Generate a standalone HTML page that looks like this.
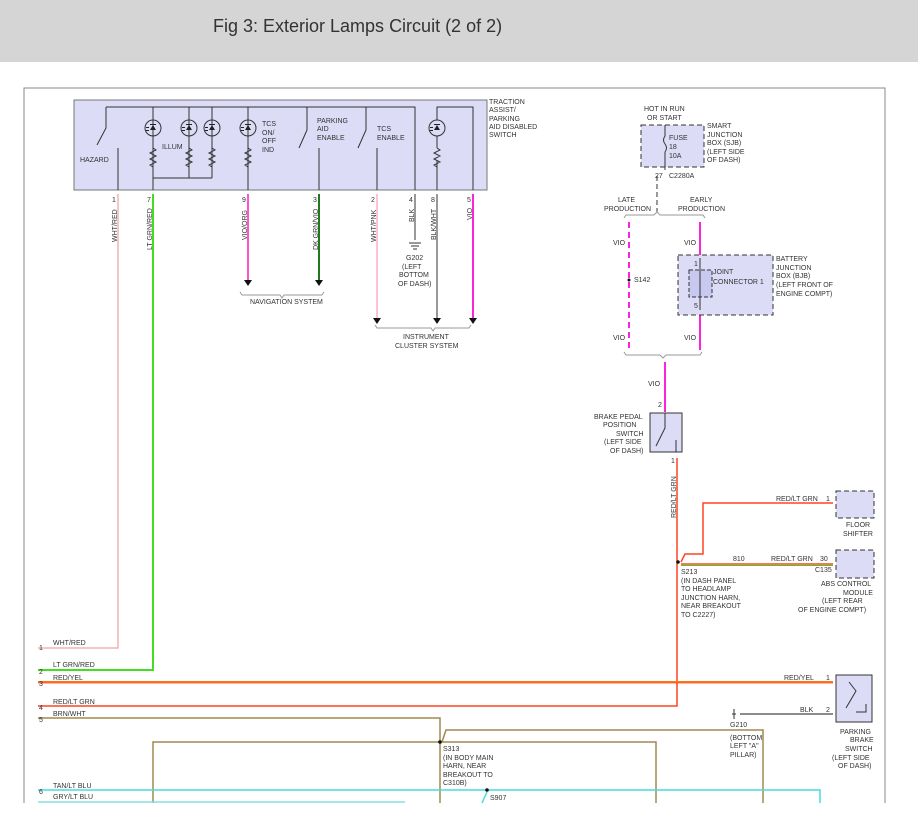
<!DOCTYPE html>
<html><head><meta charset="utf-8"><style>
html,body{margin:0;padding:0;background:#fff;width:918px;height:827px;overflow:hidden}
.hdr{position:absolute;left:0;top:0;width:918px;height:62px;background:#d5d5d5}
.hdr span{position:absolute;left:213px;top:16px;font:18px "Liberation Sans",sans-serif;color:#333}
svg{position:absolute;left:0;top:0}
text{font-family:"Liberation Sans",sans-serif;font-size:7px;fill:#333}
</style></head><body>
<div class="hdr"><span>Fig 3: Exterior Lamps Circuit (2 of 2)</span></div>
<svg width="918" height="827" viewBox="0 0 918 827">
<path d="M24 803V88H885V803" fill="none" stroke="#888" stroke-width="1"/>
<rect x="74" y="100" width="413" height="90" fill="#dcdcf7" stroke="#777"/>
<g stroke="#333" stroke-width="1" fill="none">
<path d="M106 107H415V190M153 107V190M189 107V178M212 107V178M248 107V190M307 107V130M366 107V130"/>
<path d="M153 178H212"/>
<path d="M106 107V128L97 145M118 148V190M307 130L299 148M319 148V190M366 130L358 148M377 148V190"/>
<path d="M437 190V160M437 120V107H473V190"/>
</g>
<g fill="none" stroke="#333">
<circle cx="153" cy="128" r="8"/><circle cx="189" cy="128" r="8"/><circle cx="212" cy="128" r="8"/><circle cx="248" cy="128" r="8"/><circle cx="437" cy="128" r="8"/>
<path d="M153 148l3 2-6 3 6 3-6 3 6 3-6 3 3 2M189 148l3 2-6 3 6 3-6 3 6 3-6 3 3 2M212 148l3 2-6 3 6 3-6 3 6 3-6 3 3 2M248 148l3 2-6 3 6 3-6 3 6 3-6 3 3 2M437 148l3 2-6 3 6 3-6 3 6 3-6 3 3 2"/>
<path d="M153 136V148M189 136V148M212 136V148M248 136V148M437 136V148"/>
</g>
<g fill="#222">
<path d="M153 125l-3 5h6z M150 125h6v-1h-6z M146 127h3v1h-3zM146 130h3v1h-3z"/>
<path d="M189 125l-3 5h6z M186 125h6v-1h-6z M182 127h3v1h-3zM182 130h3v1h-3z"/>
<path d="M212 125l-3 5h6z M209 125h6v-1h-6z M205 127h3v1h-3zM205 130h3v1h-3z"/>
<path d="M248 125l-3 5h6z M245 125h6v-1h-6z M241 127h3v1h-3zM241 130h3v1h-3z"/>
<path d="M437 125l-3 5h6z M434 125h6v-1h-6z M430 127h3v1h-3zM430 130h3v1h-3z"/>
</g>
<g font-size="7">
<text x="80" y="162">HAZARD</text><text x="162" y="149">ILLUM</text>
<text x="262" y="126">TCS</text><text x="262" y="135">ON/</text><text x="262" y="143">OFF</text><text x="262" y="152">IND</text>
<text x="317" y="123">PARKING</text><text x="317" y="131">AID</text><text x="317" y="140">ENABLE</text>
<text x="377" y="131">TCS</text><text x="377" y="140">ENABLE</text>
<text x="489" y="104">TRACTION</text><text x="489" y="112">ASSIST/</text><text x="489" y="121">PARKING</text><text x="489" y="129">AID DISABLED</text><text x="489" y="137">SWITCH</text>
<text x="112" y="202">1</text><text x="147" y="202">7</text><text x="242" y="202">9</text><text x="313" y="202">3</text><text x="371" y="202">2</text><text x="409" y="202">4</text><text x="431" y="202">8</text><text x="467" y="202">5</text>
</g>
<path d="M118 194V648H38" stroke="#f4b4b4" stroke-width="1.5" fill="none"/>
<path d="M153 194V670H38" stroke="#44dd22" stroke-width="2" fill="none"/>
<path d="M248 194V280" stroke="#ff55cc" stroke-width="2"/>
<path d="M319 194V280" stroke="#227722" stroke-width="2"/>
<path d="M377 194V318" stroke="#ffaacc" stroke-width="1.5"/>
<path d="M415 194V240" stroke="#333" stroke-width="1"/>
<path d="M437 194V318" stroke="#999" stroke-width="2"/>
<path d="M473 194V318" stroke="#ff22dd" stroke-width="2"/>
<g fill="#111"><path d="M244 280h8l-4 6zM315 280h8l-4 6zM373 318h8l-4 6zM433 318h8l-4 6zM469 318h8l-4 6z"/></g>
<path d="M409 243h12M411 246h8M413 249h4" stroke="#333"/>
<path d="M240 292l2 3h38l2 3 2-3h38l2-3M375 325l2 3h54l2 3 2-3h34l2-3" stroke="#999" fill="none"/>
<g font-size="7">
<text transform="translate(117,242) rotate(-90)">WHT/RED</text>
<text transform="translate(152,250) rotate(-90)">LT GRN/RED</text>
<text transform="translate(247,240) rotate(-90)">VIO/ORG</text>
<text transform="translate(318,250) rotate(-90)">DK GRN/VIO</text>
<text transform="translate(376,242) rotate(-90)">WHT/PNK</text>
<text transform="translate(414,222) rotate(-90)">BLK</text>
<text transform="translate(436,240) rotate(-90)">BLK/WHT</text>
<text transform="translate(472,220) rotate(-90)">VIO</text>
<text x="406" y="260">G202</text><text x="402" y="269">(LEFT</text><text x="399" y="277">BOTTOM</text><text x="398" y="286">OF DASH)</text>
<text x="250" y="304">NAVIGATION SYSTEM</text>
<text x="403" y="339">INSTRUMENT</text><text x="395" y="348">CLUSTER SYSTEM</text>
</g>
<rect x="641" y="125" width="63" height="42" fill="#dcdcf7" stroke="#333" stroke-dasharray="5,3"/>
<path d="M665 125V136q-3 4 0 8q3 4 0 8V170" stroke="#333" fill="none"/>
<path d="M657 176V212" stroke="#333" stroke-dasharray="5,3"/>
<g font-size="7">
<text x="644" y="111">HOT IN RUN</text><text x="647" y="120">OR START</text>
<text x="669" y="140">FUSE</text><text x="669" y="149">18</text><text x="669" y="158">10A</text>
<text x="707" y="128">SMART</text><text x="707" y="137">JUNCTION</text><text x="707" y="145">BOX (SJB)</text><text x="707" y="154">(LEFT SIDE</text><text x="707" y="162">OF DASH)</text>
<text x="655" y="178">27</text><text x="669" y="178">C2280A</text>
<text x="618" y="202">LATE</text><text x="604" y="211">PRODUCTION</text>
<text x="690" y="202">EARLY</text><text x="678" y="211">PRODUCTION</text>
</g>
<path d="M624 218l2-3h28l3-3 3 3h43l2 3M624 352l2 3h34l3 3 3-3h34l2-3" stroke="#999" fill="none"/>
<path d="M629 222V350" stroke="#ff22dd" stroke-width="2" stroke-dasharray="6,4"/>
<path d="M700 222V350" stroke="#ff22dd" stroke-width="2"/>
<rect x="678" y="255" width="95" height="60" fill="#dcdcf7" stroke="#333" stroke-dasharray="5,3"/>
<rect x="689" y="270" width="23" height="27" fill="#c8c8f0" stroke="#333" stroke-dasharray="4,2"/>
<path d="M700 258V310" stroke="#333"/>
<path d="M665 362V412" stroke="#ff22dd" stroke-width="2"/>
<circle cx="629" cy="280" r="1.5" fill="#111"/>
<g font-size="7">
<text x="613" y="245">VIO</text><text x="684" y="245">VIO</text><text x="634" y="282">S142</text>
<text x="613" y="340">VIO</text><text x="684" y="340">VIO</text><text x="648" y="386">VIO</text>
<text x="694" y="266">1</text><text x="694" y="308">5</text><text x="713" y="274">JOINT</text><text x="713" y="284">CONNECTOR 1</text>
<text x="776" y="261">BATTERY</text><text x="776" y="270">JUNCTION</text><text x="776" y="278">BOX (BJB)</text><text x="776" y="287">(LEFT FRONT OF</text><text x="776" y="296">ENGINE COMPT)</text>
<text x="658" y="407">2</text>
<text x="594" y="419">BRAKE PEDAL</text><text x="603" y="427">POSITION</text><text x="616" y="436">SWITCH</text><text x="604" y="444">(LEFT SIDE</text><text x="610" y="453">OF DASH)</text>
<text x="671" y="463">1</text>
</g>
<rect x="650" y="413" width="32" height="39" fill="#dcdcf7" stroke="#333"/>
<path d="M665 413V428L656 446M676 440V452" stroke="#333" fill="none"/>
<path d="M677 458V706H38" stroke="#ff4422" stroke-width="1.5" fill="none"/>
<path d="M681 562L685 554H703V503H833" stroke="#ff4422" stroke-width="1.5" fill="none"/>
<path d="M681 564H833" stroke="#ff4422" stroke-width="1.5"/>
<path d="M681 565.5H833" stroke="#44cc22" stroke-width="1"/>
<circle cx="678" cy="562" r="1.8" fill="#111"/>
<rect x="836" y="491" width="38" height="27" fill="#dcdcf7" stroke="#333" stroke-dasharray="5,3"/>
<rect x="836" y="550" width="38" height="28" fill="#dcdcf7" stroke="#333" stroke-dasharray="5,3"/>
<g font-size="7">
<text transform="translate(676,518) rotate(-90)">RED/LT GRN</text>
<text x="776" y="501">RED/LT GRN</text><text x="826" y="501">1</text>
<text x="846" y="527">FLOOR</text><text x="843" y="536">SHIFTER</text>
<text x="733" y="561">810</text><text x="771" y="561">RED/LT GRN</text><text x="820" y="561">30</text><text x="815" y="572">C135</text>
<text x="821" y="586">ABS CONTROL</text><text x="843" y="595">MODULE</text><text x="822" y="603">(LEFT REAR</text><text x="798" y="612">OF ENGINE COMPT)</text>
<text x="681" y="574">S213</text><text x="681" y="583">(IN DASH PANEL</text><text x="681" y="591">TO HEADLAMP</text><text x="681" y="600">JUNCTION HARN,</text><text x="681" y="608">NEAR BREAKOUT</text><text x="681" y="617">TO C2227)</text>
</g>
<path d="M38 682H833" stroke="#ff7711" stroke-width="2"/>
<path d="M38 683H833" stroke="#ff4422" stroke-width="0.7"/>
<path d="M740 714H833" stroke="#666" stroke-width="1.5"/>
<path d="M734 709v10M732 714h4" stroke="#333"/>
<rect x="836" y="675" width="36" height="47" fill="#dcdcf7" stroke="#333"/>
<path d="M849 682L856 691L846 708M856 712H866V704" stroke="#333" fill="none"/>
<path d="M38 718H440V803M153 803V742H656V803M442 742L446 730H763V803" stroke="#a08850" stroke-width="1.5" fill="none"/>
<circle cx="440" cy="742" r="1.8" fill="#111"/>
<path d="M38 790H820V803" stroke="#44dddd" stroke-width="1.5" fill="none"/>
<path d="M38 802H405" stroke="#88dddd" stroke-width="1.5"/>
<path d="M482 803L487 792" stroke="#44dddd" stroke-width="1.5"/>
<circle cx="487" cy="790" r="1.8" fill="#111"/>
<g font-size="7">
<text x="53" y="645">WHT/RED</text><text x="39" y="650">1</text>
<text x="53" y="667">LT GRN/RED</text><text x="39" y="674">2</text>
<text x="53" y="680">RED/YEL</text><text x="39" y="686">3</text>
<text x="53" y="704">RED/LT GRN</text><text x="39" y="710">4</text>
<text x="53" y="716">BRN/WHT</text><text x="39" y="722">5</text>
<text x="53" y="788">TAN/LT BLU</text><text x="39" y="794">6</text>
<text x="53" y="799">GRY/LT BLU</text>
<text x="784" y="680">RED/YEL</text><text x="826" y="680">1</text>
<text x="800" y="712">BLK</text><text x="826" y="712">2</text>
<text x="730" y="727">G210</text><text x="730" y="740">(BOTTOM</text><text x="730" y="748">LEFT "A"</text><text x="730" y="757">PILLAR)</text>
<text x="840" y="734">PARKING</text><text x="850" y="742">BRAKE</text><text x="845" y="751">SWITCH</text><text x="832" y="760">(LEFT SIDE</text><text x="838" y="768">OF DASH)</text>
<text x="443" y="751">S313</text><text x="443" y="760">(IN BODY MAIN</text><text x="443" y="768">HARN, NEAR</text><text x="443" y="777">BREAKOUT TO</text><text x="443" y="785">C310B)</text>
<text x="490" y="800">S907</text>
</g>
</svg>
</body></html>
